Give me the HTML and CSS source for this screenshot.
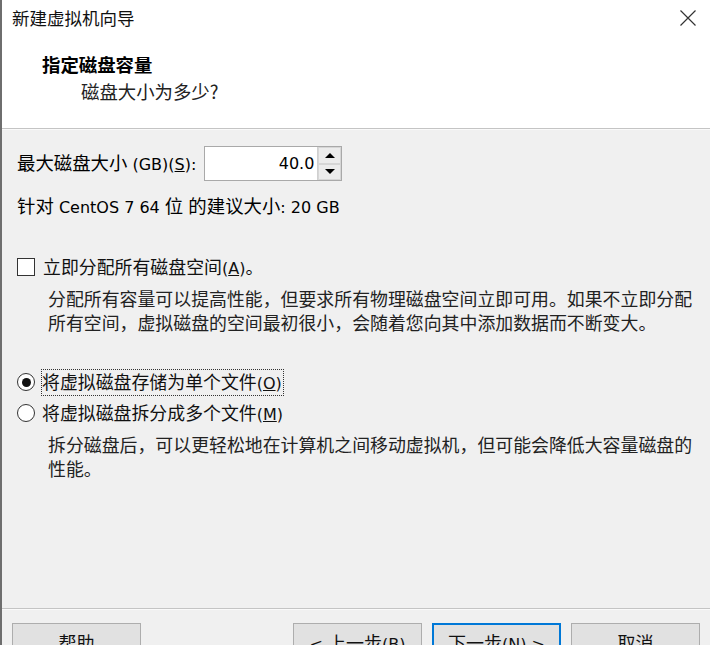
FILE: index.html
```html
<!DOCTYPE html>
<html lang="zh-CN">
<head>
<meta charset="utf-8">
<title>新建虚拟机向导</title>
<link rel="stylesheet" href="styles.css">
</head>
<body>
<div class="dialog">
  <header class="head">
    <div class="titlebar">
      <span class="title">新建虚拟机向导</span>
      <svg class="close" width="16" height="16" viewBox="0 0 16 16" aria-hidden="true">
        <path d="M0.5 0.5 L15.5 15.5 M15.5 0.5 L0.5 15.5" stroke="#333" stroke-width="1.2" fill="none"/>
      </svg>
    </div>
    <div class="heading">指定磁盘容量</div>
    <div class="subheading">磁盘大小为多少?</div>
  </header>

  <main class="content">
    <div class="size-row">
      <span class="label">最大磁盘大小<span class="lat"> (GB)(<u>S</u>):</span></span>
      <div class="spin">
        <div class="spin-value">40.0</div>
        <div class="spin-arrows">
          <div class="spin-btn"><span class="tri up"></span></div>
          <div class="spin-btn"><span class="tri down"></span></div>
        </div>
      </div>
    </div>

    <p class="hint">针对<span class="lat"> CentOS 7 64 </span>位<span class="lat"> </span>的建议大小<span class="lat">: 20 GB</span></p>

    <div class="option opt-check">
      <span class="checkbox"></span>
      <span class="opt-label">立即分配所有磁盘空间<span class="lat">(<u>A</u>)</span>。</span>
    </div>
    <p class="desc">分配所有容量可以提高性能，但要求所有物理磁盘空间立即可用。如果不立即分配<br>所有空间，虚拟磁盘的空间最初很小，会随着您向其中添加数据而不断变大。</p>

    <div class="option opt-radio1">
      <span class="radio checked"></span>
      <span class="opt-label focus">将虚拟磁盘存储为单个文件<span class="lat">(<u>O</u>)</span></span>
    </div>
    <div class="option opt-radio2">
      <span class="radio"></span>
      <span class="opt-label">将虚拟磁盘拆分成多个文件<span class="lat">(<u>M</u>)</span></span>
    </div>
    <p class="desc desc2">拆分磁盘后，可以更轻松地在计算机之间移动虚拟机，但可能会降低大容量磁盘的<br>性能。</p>
  </main>

  <footer class="foot">
    <button class="btn">帮助</button>
    <div class="spacer"></div>
    <button class="btn"><span class="lat">&lt; </span>上一步<span class="lat">(B)</span></button>
    <button class="btn primary">下一步<span class="lat">(N) &gt;</span></button>
    <button class="btn">取消</button>
  </footer>
</div>
</body>
</html>
```

FILE: styles.css
```css
html, body {
  margin: 0;
  padding: 0;
  background: #f0f0f0;
}

body {
  font-family: "Noto Sans CJK SC", sans-serif;
  color: #000;
}

.lat {
  font-family: "DejaVu Sans", "Noto Sans CJK SC", sans-serif;
  font-size: 16px;
}

.dialog {
  width: 710px;
  height: 645px;
  box-sizing: border-box;
  border-left: 2px solid #6e6e6e;
  display: flex;
  flex-direction: column;
  overflow: hidden;
  background: #f0f0f0;
}

.head {
  background: #fff;
  height: 129px;
  flex-shrink: 0;
  border-bottom: 1px solid #c4c4c4;
  box-shadow: 0 1px 0 #fafafa;
  box-sizing: border-box;
}

.titlebar {
  height: 34px;
  display: flex;
  align-items: center;
  justify-content: space-between;
  padding: 0 14px 0 10px;
}

.title {
  font-size: 17.5px;
  color: #111;
}

.close {
  display: block;
  margin-top: 1px;
}

.heading {
  font-weight: 700;
  font-size: 18.4px;
  line-height: 24px;
  margin: 18px 0 0 40px;
}

.subheading {
  font-size: 18.4px;
  line-height: 24px;
  margin: 3px 0 0 79px;
  color: #222;
}

.content {
  flex: 1;
  padding: 17px 0 0 15px;
  box-sizing: border-box;
}

.size-row {
  display: flex;
  align-items: center;
  height: 35px;
}

.label {
  font-size: 18.4px;
  line-height: 24px;
  white-space: nowrap;
}

.spin {
  margin-left: 8px;
  width: 138px;
  height: 35px;
  box-sizing: border-box;
  border: 1px solid #a9a9a9;
  background: #fff;
  display: flex;
}

.spin-value {
  flex: 1;
  text-align: right;
  font-family: "DejaVu Sans", sans-serif;
  font-size: 16px;
  line-height: 33px;
  padding-right: 3px;
}

.spin-arrows {
  width: 23px;
  display: flex;
  flex-direction: column;
  border-left: 1px solid #d0d0d0;
}

.spin-btn {
  flex: 1;
  background: #ececec;
  border: 1px solid #d6d6d6;
  display: flex;
  align-items: center;
  justify-content: center;
}

.tri {
  width: 0;
  height: 0;
  border-left: 5px solid transparent;
  border-right: 5px solid transparent;
}

.tri.up { border-bottom: 5px solid #000; }
.tri.down { border-top: 5px solid #000; }

.hint {
  margin: 12px 0 0 0;
  font-size: 18.4px;
  line-height: 24px;
  white-space: nowrap;
}

.option {
  display: flex;
  align-items: center;
  height: 24px;
  font-size: 17.9px;
}

.opt-check { margin-top: 35px; }
.opt-radio1 { margin-top: 36px; }
.opt-radio2 { margin-top: 7px; }

.checkbox {
  width: 18px;
  height: 18px;
  box-sizing: border-box;
  border: 1px solid #333;
  background: #fff;
  margin-right: 8px;
}

.radio {
  width: 18px;
  height: 18px;
  box-sizing: border-box;
  border: 1px solid #333;
  border-radius: 50%;
  background: #fff;
  margin-right: 7px;
  display: flex;
  align-items: center;
  justify-content: center;
}

.radio.checked::after {
  content: "";
  width: 9px;
  height: 9px;
  border-radius: 50%;
  background: #111;
}

.opt-label {
  font-size: 17.9px;
  line-height: 22px;
  color: #111;
  white-space: nowrap;
}

.opt-label.focus {
  outline: 1px dotted #333;
  outline-offset: 0;
  padding: 0 1px 0 0;
}

.desc {
  margin: 7px 0 0 31px;
  font-size: 17.9px;
  line-height: 24px;
  color: #222;
  white-space: nowrap;
}

.desc2 {
  margin-top: 7px;
}

.foot {
  height: 37px;
  flex-shrink: 0;
  box-sizing: border-box;
  border-top: 1px solid #c4c4c4;
  box-shadow: inset 0 1px 0 #fafafa;
  padding: 14px 10px 0 10px;
  display: flex;
  align-items: flex-start;
  gap: 10px;
  overflow: visible;
}

.spacer { flex: 1; }

.btn {
  flex-shrink: 0;
  width: 129px;
  height: 34px;
  box-sizing: border-box;
  border: 1px solid #adadad;
  background: #e1e1e1;
  font-family: "Noto Sans CJK SC", sans-serif;
  font-size: 18px;
  color: #111;
  padding: 4px 0 0 0;
  margin: 0;
  white-space: nowrap;
}

.btn.primary {
  border: 2px solid #0078d7;
}
```
